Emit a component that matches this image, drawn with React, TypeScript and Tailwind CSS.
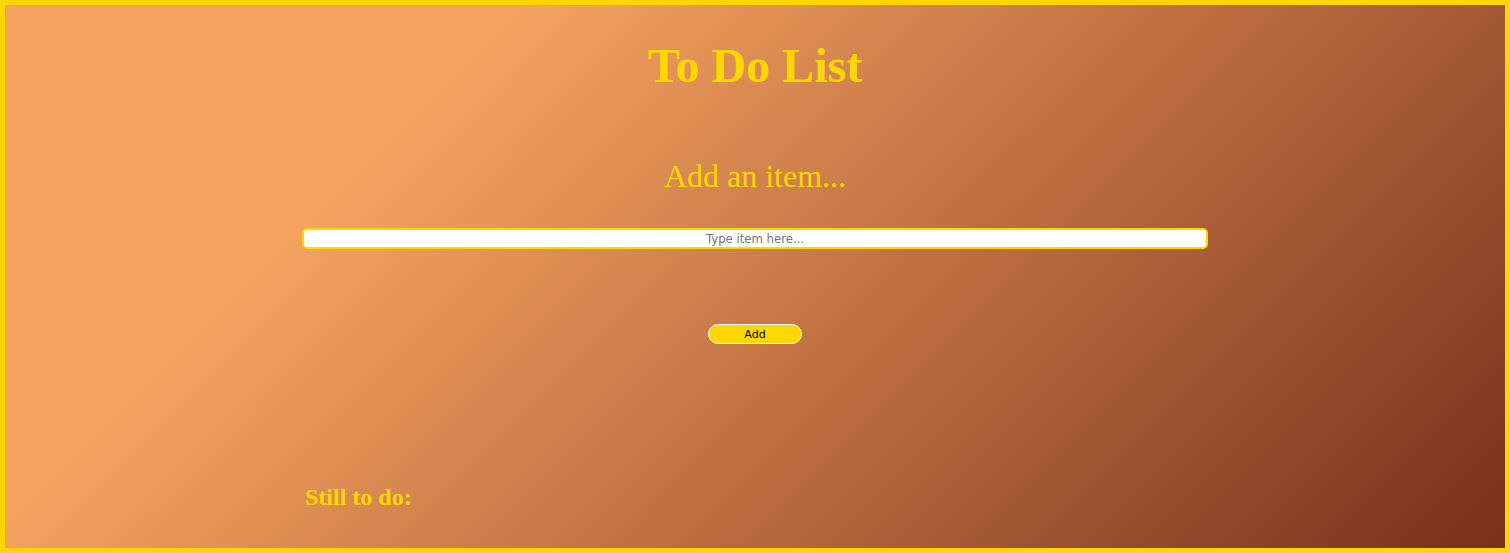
export default function App() {
  return (
    <div className="h-[553px] w-full border-[5px] border-[#ffd700] bg-[linear-gradient(135deg,#f4a460_25%,#7a2e1b_100%)] flex flex-col items-center font-['Liberation_Serif','Times_New_Roman',serif] text-[#ffd700]">
      <h1 className="pt-[37px] text-[48px] leading-[48px] font-bold">To Do List</h1>
      <h2 className="mt-[70px] text-[32px] leading-[32px] font-normal">Add an item...</h2>
      <input
        type="text"
        placeholder="Type item here..."
        className="mt-[36px] w-[906px] h-[21px] border-2 border-[#ffd700] rounded-[5px] bg-white text-center text-[11.7px] text-black font-['DejaVu_Sans',sans-serif] placeholder:text-[#757575] outline-none"
      />
      <button className="mt-[75px] w-[94px] h-[20px] rounded-full border border-white bg-[#ffd700] text-black text-[11px] leading-none font-['DejaVu_Sans',sans-serif]">
        Add
      </button>
      <div className="mt-[141px] w-[906px] pl-[3px]">
        <h3 className="text-[24px] leading-[24px] font-bold">Still to do:</h3>
      </div>
    </div>
  );
}
